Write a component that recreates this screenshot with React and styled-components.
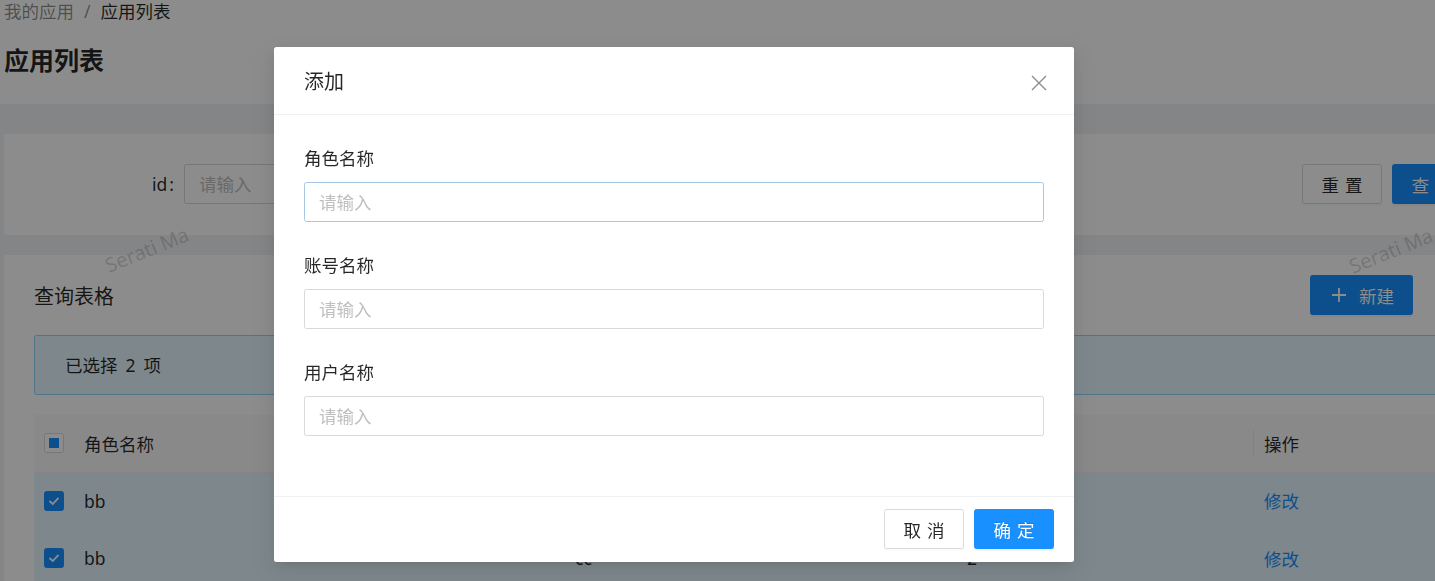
import React from "react";
import styled, { createGlobalStyle } from "styled-components";
import { RotateCw, ArrowUpDown, Settings } from "lucide-react";

const GlobalStyle = createGlobalStyle`
  html, body {
    margin: 0;
    padding: 0;
  }
  body {
    background: #f0f2f5;
    font-family: "Noto Sans", "Noto Sans CJK SC", sans-serif;
    font-size: 17.5px;
    color: rgba(0, 0, 0, 0.85);
    overflow: hidden;
  }
  * {
    box-sizing: border-box;
  }
`;

const Page = styled.div`
  position: relative;
  width: 1600px;
  height: 581px;
  overflow: hidden;
`;

const Header = styled.header`
  background: #fff;
  height: 104px;
  padding-left: 4px;
`;

const Breadcrumb = styled.nav`
  display: flex;
  align-items: center;
  height: 22px;
  line-height: 22px;
`;

const Crumb = styled.span`
  color: ${(p) => (p.$current ? "rgba(0,0,0,0.85)" : "rgba(0,0,0,0.45)")};
`;

const Sep = styled.span`
  margin: 0 10px;
  color: rgba(0, 0, 0, 0.45);
`;

const PageTitle = styled.h1`
  margin: 21px 0 0;
  font-size: 25px;
  line-height: 35px;
  font-weight: 700;
  color: rgba(0, 0, 0, 0.85);
`;

const Content = styled.main`
  padding: 30px 0 0 4px;
  display: flex;
  flex-direction: column;
  gap: 20px;
`;

const Card = styled.section`
  width: 1553px;
  background: #fff;
`;

const SearchCard = styled(Card)`
  padding: 30px 85px 31px 30px;
`;

const SearchRow = styled.div`
  display: grid;
  grid-template-columns: 150px 330px 1fr auto;
  align-items: center;
  height: 40px;
`;

const Label = styled.label`
  text-align: right;
  color: rgba(0, 0, 0, 0.85);
`;

const Colon = styled.span`
  margin: 0 10px 0 2px;
`;

const Input = styled.input`
  width: 100%;
  height: ${(p) => p.$h || "40px"};
  padding: 0 14px;
  border: 1px solid ${(p) => (p.$active ? "#a6c8e4" : "#d9d9d9")};
  border-radius: 2.5px;
  background: #fff;
  font: inherit;
  font-size: 17.5px;
  color: rgba(0, 0, 0, 0.85);
  outline: none;
  &::placeholder {
    color: #bfbfbf;
  }
`;

const ButtonGroup = styled.div`
  grid-column: 4;
  display: flex;
  gap: 10px;
`;

const Button = styled.button`
  height: 40px;
  min-width: 80px;
  padding: 0 18px;
  display: inline-flex;
  align-items: center;
  justify-content: center;
  gap: 10px;
  border-radius: 2.5px;
  font: inherit;
  font-size: 17.5px;
  cursor: pointer;
  border: 1px solid ${(p) => (p.$primary ? "#1890ff" : "#d9d9d9")};
  background: ${(p) => (p.$primary ? "#1890ff" : "#fff")};
  color: ${(p) => (p.$primary ? "#fff" : "rgba(0,0,0,0.85)")};
  box-shadow: 0 2px 0
    ${(p) => (p.$primary ? "rgba(0,0,0,0.045)" : "rgba(0,0,0,0.015)")};
  text-shadow: ${(p) => (p.$primary ? "0 -1px 0 rgba(0,0,0,0.12)" : "none")};
`;

const Spaced = styled.span`
  letter-spacing: 0.34em;
  margin-right: -0.34em;
`;

const TableCard = styled(Card)`
  padding: 20px 30px 0;
`;

const Toolbar = styled.div`
  display: flex;
  align-items: center;
  justify-content: space-between;
  height: 40px;
  margin-bottom: 20px;
`;

const CardTitle = styled.h3`
  margin: 0;
  font-size: 20px;
  font-weight: 400;
  color: rgba(0, 0, 0, 0.85);
`;

const ToolbarRight = styled.div`
  display: flex;
  align-items: center;
  gap: 24px;
`;

const Options = styled.div`
  display: flex;
  gap: 15px;
  color: rgba(0, 0, 0, 0.75);
`;

const Alert = styled.div`
  display: flex;
  align-items: center;
  height: 59.5px;
  padding: 0 30px;
  margin-bottom: 20px;
  background: #e6f7ff;
  border: 1px solid #91d5ff;
  border-radius: 2.5px;
`;

const Count = styled.span`
  margin: 0 8px;
`;

const Row = styled.div`
  display: grid;
  grid-template-columns: 40px 491px 392px 297px 1fr;
  height: ${(p) => (p.$head ? "58px" : "57.5px")};
  background: ${(p) => (p.$head ? "#fafafa" : p.$selected ? "#e6f7ff" : "#fff")};
  border-bottom: 1px solid #f0f0f0;
`;

const Cell = styled.div`
  position: relative;
  display: flex;
  align-items: center;
  padding: 0 10px;
  color: rgba(0, 0, 0, 0.85);
  &::before {
    content: "";
    display: ${(p) => (p.$sep ? "block" : "none")};
    position: absolute;
    right: 0;
    top: 50%;
    width: 1px;
    height: 27px;
    transform: translateY(-50%);
    background: rgba(0, 0, 0, 0.06);
  }
`;

const Link = styled.a`
  color: #1890ff;
  text-decoration: none;
`;

const Check = styled.span`
  width: 20px;
  height: 20px;
  display: inline-flex;
  align-items: center;
  justify-content: center;
  border-radius: 2.5px;
  border: 1px solid ${(p) => (p.$checked ? "#1890ff" : "#d9d9d9")};
  background: ${(p) => (p.$checked ? "#1890ff" : "#fff")};
`;

const Indeterminate = styled.span`
  width: 10px;
  height: 10px;
  background: #1890ff;
`;

const Watermark = styled.span`
  position: absolute;
  left: ${(p) => p.$x}px;
  top: ${(p) => p.$y}px;
  font-family: "Open Sans", "Noto Sans", sans-serif;
  font-size: 20px;
  line-height: 28px;
  white-space: nowrap;
  color: rgba(0, 0, 0, 0.18);
  transform: rotate(-22deg);
  pointer-events: none;
`;

const Mask = styled.div`
  position: fixed;
  inset: 0;
  background: rgba(0, 0, 0, 0.45);
  z-index: 1000;
`;

const Dialog = styled.div`
  position: fixed;
  top: 47px;
  left: 274px;
  width: 800px;
  background: #fff;
  border-radius: 2.5px;
  z-index: 1001;
  box-shadow: 0 3px 6px -4px rgba(0, 0, 0, 0.12),
    0 6px 16px 0 rgba(0, 0, 0, 0.08), 0 9px 28px 8px rgba(0, 0, 0, 0.05);
`;

const DialogHeader = styled.div`
  position: relative;
  padding: 21px 30px 18px;
  border-bottom: 1px solid #f0f0f0;
`;

const DialogTitle = styled.div`
  font-size: 20px;
  line-height: 27.5px;
  color: rgba(0, 0, 0, 0.85);
`;

const Close = styled.button`
  position: absolute;
  top: 0;
  right: 0;
  width: 71px;
  height: 71px;
  display: flex;
  align-items: center;
  justify-content: center;
  border: 0;
  background: transparent;
  padding: 0;
  cursor: pointer;
`;

const DialogBody = styled.div`
  padding: 30px;
`;

const FormItem = styled.div`
  margin-bottom: 30px;
`;

const FormLabel = styled.div`
  line-height: 27.5px;
  padding-bottom: 10px;
  color: rgba(0, 0, 0, 0.85);
`;

const DialogFooter = styled.div`
  display: flex;
  justify-content: flex-end;
  gap: 10px;
  padding: 12.5px 20px;
  border-top: 1px solid #f0f0f0;
`;

const CheckIcon = () => (
  <svg width="12" height="10" viewBox="0 0 12 10">
    <polyline
      points="1.5,5 4.8,8 10.5,1.8"
      fill="none"
      stroke="#fff"
      strokeWidth="1.8"
    />
  </svg>
);

const PlusIcon = () => (
  <svg width="20" height="20" viewBox="0 0 20 20">
    <path d="M10 3v14M3 10h14" stroke="#fff" strokeWidth="1.8" />
  </svg>
);

const rows = [
  { name: "bb", account: "cc", user: "2" },
  { name: "bb", account: "cc", user: "2" },
];

function App() {
  return (
    <>
      <GlobalStyle />
      <Page>
        <Header>
          <Breadcrumb>
            <Crumb>我的应用</Crumb>
            <Sep>/</Sep>
            <Crumb $current>应用列表</Crumb>
          </Breadcrumb>
          <PageTitle>应用列表</PageTitle>
        </Header>

        <Content>
          <SearchCard>
            <SearchRow>
              <Label>
                id<Colon>:</Colon>
              </Label>
              <Input placeholder="请输入" />
              <ButtonGroup>
                <Button>
                  <Spaced>重置</Spaced>
                </Button>
                <Button $primary>
                  <Spaced>查询</Spaced>
                </Button>
              </ButtonGroup>
            </SearchRow>
          </SearchCard>

          <TableCard>
            <Toolbar>
              <CardTitle>查询表格</CardTitle>
              <ToolbarRight>
                <Button $primary>
                  <PlusIcon />
                  新建
                </Button>
                <Options>
                  <RotateCw size={20} />
                  <ArrowUpDown size={20} />
                  <Settings size={20} />
                </Options>
              </ToolbarRight>
            </Toolbar>

            <Alert>
              已选择<Count>2</Count>项
            </Alert>

            <Row $head>
              <Cell>
                <Check>
                  <Indeterminate />
                </Check>
              </Cell>
              <Cell $sep>角色名称</Cell>
              <Cell $sep>账号名称</Cell>
              <Cell $sep>用户名称</Cell>
              <Cell>操作</Cell>
            </Row>
            {rows.map((r, i) => (
              <Row key={i} $selected>
                <Cell>
                  <Check $checked>
                    <CheckIcon />
                  </Check>
                </Cell>
                <Cell>{r.name}</Cell>
                <Cell>{r.account}</Cell>
                <Cell>{r.user}</Cell>
                <Cell>
                  <Link href="#">修改</Link>
                </Cell>
              </Row>
            ))}
          </TableCard>
        </Content>

        <Watermark $x={103} $y={236}>Serati Ma</Watermark>
        <Watermark $x={725} $y={236}>Serati Ma</Watermark>
        <Watermark $x={1347} $y={237}>Serati Ma</Watermark>
      </Page>

      <Mask />
      <Dialog>
        <DialogHeader>
          <DialogTitle>添加</DialogTitle>
          <Close aria-label="close">
            <svg width="16" height="16" viewBox="0 0 16 16">
              <path
                d="M1 1L15 15M15 1L1 15"
                stroke="rgba(0,0,0,0.45)"
                strokeWidth="1.4"
              />
            </svg>
          </Close>
        </DialogHeader>
        <DialogBody>
          <FormItem>
            <FormLabel>角色名称</FormLabel>
            <Input $h="39.5px" $active placeholder="请输入" />
          </FormItem>
          <FormItem>
            <FormLabel>账号名称</FormLabel>
            <Input $h="39.5px" placeholder="请输入" />
          </FormItem>
          <FormItem>
            <FormLabel>用户名称</FormLabel>
            <Input $h="39.5px" placeholder="请输入" />
          </FormItem>
        </DialogBody>
        <DialogFooter>
          <Button>
            <Spaced>取消</Spaced>
          </Button>
          <Button $primary>
            <Spaced>确定</Spaced>
          </Button>
        </DialogFooter>
      </Dialog>
    </>
  );
}

export default App;
